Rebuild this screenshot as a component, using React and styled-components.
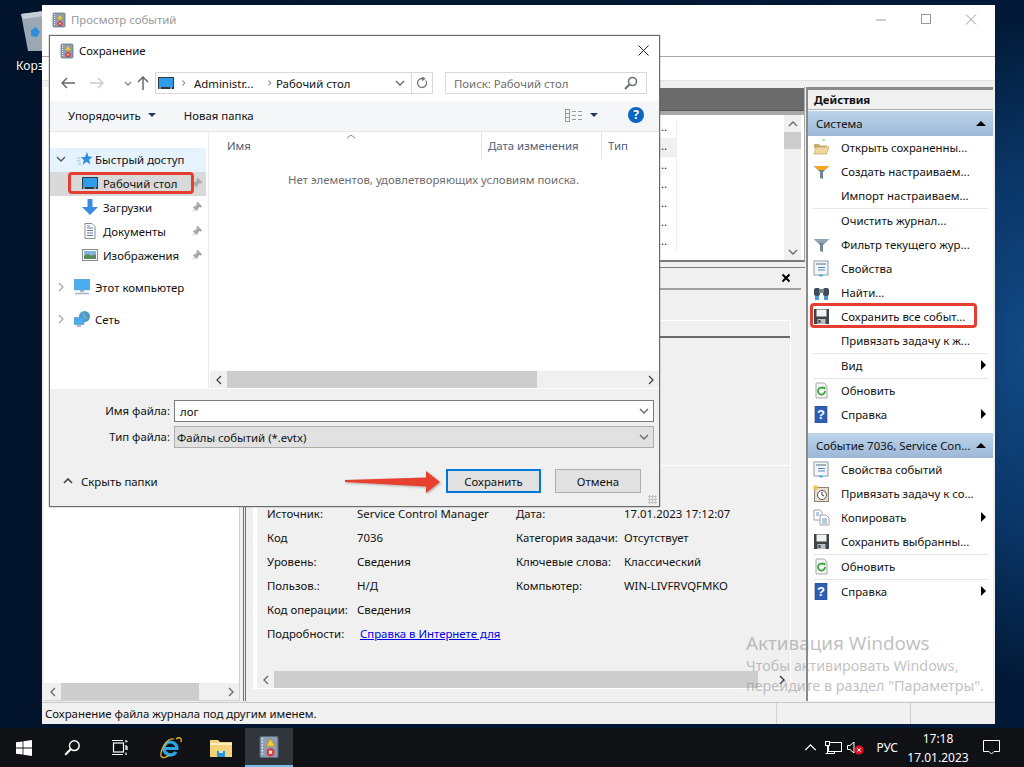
import React from 'react';
import styled, { createGlobalStyle } from 'styled-components';

const GlobalStyle = createGlobalStyle`
  html, body { margin: 0; padding: 0; background: #021830; }
  * { box-sizing: border-box; }
  #root { font-family: 'Noto Sans', 'Liberation Sans', sans-serif; font-size: 11.4px; color: #111; }
`;

const Desktop = styled.div`
  position: relative;
  width: 1024px;
  height: 767px;
  overflow: hidden;
  display: flex;
  flex-direction: column;
`;

const Wallpaper = styled.div`
  position: relative;
  flex: 1;
  background:
    radial-gradient(ellipse 140px 330px at 100% 48%, #124a85 0%, #0a3566 55%, transparent 100%),
    linear-gradient(90deg, #01142b 0%, #021a38 100%);
`;

const BinIcon = styled.div`
  position: absolute;
  left: 16px;
  top: 10px;
  width: 40px;
  color: #fff;
  font-size: 12px;
  line-height: 16px;
  white-space: nowrap;
  svg { display: block; margin: 0 0 4px 4px; }
  span { text-shadow: 0 1px 2px #000; }
`;

/* main event viewer window */
const MainWindow = styled.div`
  position: absolute;
  left: 42px;
  top: 5px;
  width: 953px;
  height: 719px;
  background: #f0f0f0;
  display: flex;
  flex-direction: column;
`;

const TitleBar = styled.div`
  height: 52px;
  flex: none;
  background: #fff;
  display: flex;
  align-items: flex-start;
  padding: 7px 0 0 9px;
  border-bottom: 1px solid #a8a8a8;
`;

const TitleText = styled.span`
  margin-left: 4px;
  color: #999;
  line-height: 16px;
`;

const WindowControls = styled.div`
  margin-left: auto;
  display: flex;
  padding: 2px 18px 0 0;
  gap: 33px;
  svg { display: block; }
`;

const MenuBar = styled.div`
  height: 24px;
  flex: none;
  background: #fff;
  border-bottom: 1px solid #e3e3e3;
`;

const Workspace = styled.div`
  flex: 1;
  min-height: 0;
  display: flex;
  padding: 6px 2px 0 2px;
`;

const TreePane = styled.div`
  width: 196px;
  flex: none;
  margin-right: 3px;
  background: #fff;
  display: flex;
  flex-direction: column;
  justify-content: flex-end;
  border-right: 1px solid #d0d0d0;
  border-bottom: 1px solid #d0d0d0;
`;

const Scrollbar = styled.div`
  height: 17px;
  flex: none;
  background: #f0f0f0;
  display: flex;
  align-items: center;
`;

const ScrollArrow = styled.div`
  width: 17px;
  height: 17px;
  flex: none;
  display: flex;
  align-items: center;
  justify-content: center;
  margin-left: ${({ $end }) => ($end ? 'auto' : '0')};
`;

const ScrollThumb = styled.div`
  height: 17px;
  width: ${({ $w }) => $w}px;
  background: #cdcdcd;
`;

const CenterPane = styled.div`
  width: 562px;
  flex: none;
  display: flex;
  flex-direction: column;
  border-left: 3px double #6f6f6f;
`;

const TopPane = styled.div`
  height: 175px;
  flex: none;
  display: flex;
  flex-direction: column;
  border-right: 1px solid #a8a8a8;
  border-bottom: 2px solid #7a7a7a;
`;

const DarkHeader = styled.div`
  height: 23px;
  flex: none;
  margin-top: 1px;
  background: #6b6b6b;
  border-bottom: 1px solid #555;
`;

const EventListWrap = styled.div`
  flex: 1;
  position: relative;
  background: #fff;
  border-top: 4px solid #a8a8a8;
  padding-top: 4px;
`;

const EventRow = styled.div`
  width: 431px;
  height: 19px;
  line-height: 15px;
  text-align: right;
  padding-right: 9px;
  color: #222;
  border-right: 1px solid #eee;
  background: ${({ $selected }) => ($selected ? '#f0f0f0' : '#fff')};
`;

const VScroll = styled.div`
  position: absolute;
  right: 3px;
  top: 0;
  bottom: 0;
  width: 17px;
  background: #f0f0f0;
  display: flex;
  flex-direction: column;
  align-items: center;
`;

const VThumb = styled.div`
  width: 17px;
  height: 17px;
  background: #cdcdcd;
`;

const VArrow = styled.div`
  height: 17px;
  display: flex;
  align-items: center;
  margin-top: ${({ $end }) => ($end ? 'auto' : '0')};
`;

const LowerPane = styled.div`
  flex: 1;
  min-height: 0;
  margin-top: 5px;
  display: flex;
  flex-direction: column;
  border-top: 1px solid #7a7a7a;
  padding: 0 6px 12px 7px;
`;

const PaneHeader = styled.div`
  height: 22px;
  flex: none;
  display: flex;
  align-items: center;
  justify-content: flex-end;
  padding-right: 10px;
  border-bottom: 2px solid #a0a0a0;
  margin-right: -2px;
`;

const TabBox = styled.div`
  flex: 1;
  min-height: 0;
  margin: 30px 8px 0 0;
  display: flex;
  flex-direction: column;
  border: 1px solid #fff;
  border-left-width: 4px;
`;

const TabStrip = styled.div`
  height: 17px;
  flex: none;
  border-bottom: 2px solid #6a6a6a;
`;

const Preview = styled.div`
  height: 128px;
  flex: none;
  border-bottom: 1px solid #fff;
`;

const Details = styled.div`
  flex: 1;
  padding: 36px 0 0 10px;
`;

const DetailGrid = styled.div`
  display: grid;
  grid-template-columns: 90px 159px 108px 1fr;
  grid-auto-rows: 24px;
  line-height: 24px;
  white-space: nowrap;
`;

const HelpLink = styled.a`
  color: #0000ee;
  text-decoration: underline;
  margin-left: 3px;
`;

const StatusBar = styled.div`
  height: 22px;
  flex: none;
  display: flex;
  align-items: center;
  padding-left: 3px;
  border-top: 1px solid #c8c8c8;
  margin-top: 1px;
`;

const StatusCell = styled.div`
  align-self: stretch;
  flex: none;
  width: ${({ $w }) => $w}px;
  border-left: 1px solid #d0d0d0;
  margin-left: ${({ $auto }) => ($auto ? 'auto' : '0')};
`;

/* actions column */
const ActionsPane = styled.div`
  width: 187px;
  flex: none;
  margin-left: 1px;
  background: #fff;
  border-top: 3px solid #8a8a8a;
  border-left: 2px solid #8a8a8a;
  display: flex;
  flex-direction: column;
`;

const ActionsTitle = styled.div`
  height: 20px;
  flex: none;
  background: #f0f0f0;
  font-weight: 700;
  line-height: 19px;
  padding-left: 6px;
  border-bottom: 1px solid #b0b0b0;
`;

const SectionBar = styled.div`
  height: 25px;
  flex: none;
  margin-top: ${({ $gap }) => $gap || 0}px;
  background: linear-gradient(180deg, #bdd5eb 0%, #9cb7d7 100%);
  display: flex;
  align-items: center;
  padding: 0 7px 0 8px;
  white-space: nowrap;
`;

const UpCaret = styled.span`
  margin-left: auto;
  width: 0;
  height: 0;
  border-left: 5px solid transparent;
  border-right: 5px solid transparent;
  border-bottom: 5px solid #000;
`;

const ActionRow = styled.div`
  height: 24px;
  flex: none;
  display: flex;
  align-items: center;
  padding: 0 6px 2px 5px;
  white-space: nowrap;
`;

const ActionIcon = styled.span`
  width: 17px;
  height: 17px;
  flex: none;
  margin-right: 11px;
  svg { display: block; }
`;

const RightCaret = styled.span`
  margin-left: auto;
  margin-right: 1px;
  width: 0;
  height: 0;
  border-top: 5px solid transparent;
  border-bottom: 5px solid transparent;
  border-left: 5px solid #000;
`;

const Separator = styled.div`
  height: 1px;
  flex: none;
  margin: 0 5px;
  background: #e6e6e6;
`;

/* save dialog */
const Dialog = styled.div`
  position: absolute;
  left: 49px;
  top: 35px;
  width: 611px;
  height: 472px;
  background: #fff;
  border: 1px solid #6a6a6a;
  display: flex;
  flex-direction: column;
  box-shadow: 0 0 1px #555;
`;

const DialogTitle = styled.div`
  height: 31px;
  flex: none;
  display: flex;
  align-items: center;
  padding: 0 10px 2px 9px;
  span { margin-left: 4px; }
  svg:last-child { margin-left: auto; }
`;

const AddressRow = styled.div`
  height: 34px;
  flex: none;
  display: flex;
  align-items: center;
  padding: 0 12px 2px 11px;
`;

const NavButton = styled.span`
  width: ${({ $w }) => $w}px;
  flex: none;
  display: flex;
  align-items: center;
  justify-content: center;
`;

const AddressBox = styled.div`
  width: 278px;
  height: 22px;
  margin-left: 6px;
  flex: none;
  border: 1px solid #d9d9d9;
  display: flex;
  align-items: center;
  padding-left: 2px;
  white-space: nowrap;
`;

const Crumb = styled.span`
  width: ${({ $w }) => $w}px;
  flex: none;
`;

const CrumbSep = styled.span`
  width: ${({ $w }) => $w}px;
  flex: none;
  display: flex;
  justify-content: center;
`;

const RefreshBox = styled.span`
  margin-left: auto;
  width: 21px;
  height: 20px;
  display: flex;
  align-items: center;
  justify-content: center;
  border-left: 1px solid #d9d9d9;
`;

const SearchBox = styled.div`
  margin-left: 12px;
  width: 202px;
  height: 22px;
  flex: none;
  border: 1px solid #d9d9d9;
  display: flex;
  align-items: center;
  justify-content: space-between;
  padding: 0 8px;
  color: #6d6d6d;
`;

const CommandBar = styled.div`
  height: 31px;
  flex: none;
  background: #f5f6f7;
  border-bottom: 1px solid #e8e8e8;
  display: flex;
  align-items: center;
  padding: 0 15px 2px 18px;
`;

const DownCaret = styled.span`
  width: 0;
  height: 0;
  margin-left: ${({ $ml }) => $ml}px;
  border-left: 4px solid transparent;
  border-right: 4px solid transparent;
  border-top: 4px solid ${({ $color }) => $color};
`;

const NewFolder = styled.span`
  margin-left: 28px;
`;

const ViewIcon = styled.span`
  margin-left: auto;
  display: flex;
`;

const HelpCircle = styled.span`
  margin-left: 30px;
  width: 16px;
  height: 16px;
  border-radius: 50%;
  background: #0a66c2;
  color: #fff;
  font-weight: 700;
  font-size: 12px;
  line-height: 16px;
  text-align: center;
`;

const DialogBody = styled.div`
  flex: 1;
  min-height: 0;
  display: flex;
`;

const NavPane = styled.div`
  width: 159px;
  flex: none;
  padding-top: 16px;
  border-right: 1px solid #ececec;
`;

const NavItem = styled.div`
  height: 24px;
  margin-right: 2px;
  margin-bottom: ${({ $after }) => $after || 0}px;
  display: flex;
  align-items: center;
  padding: 0 0 2px 5px;
  white-space: nowrap;
  background: ${({ $bg }) => $bg || 'transparent'};
`;

const Twisty = styled.span`
  width: 11px;
  flex: none;
  display: flex;
  justify-content: center;
`;

const NavIcon = styled.span`
  margin-left: ${({ $indent }) => $indent}px;
  margin-right: ${({ $gap }) => $gap}px;
  width: 16px;
  height: 16px;
  flex: none;
  svg { display: block; }
`;

const Pin = styled.span`
  margin-left: auto;
  padding-right: 4px;
  display: flex;
`;

const FileList = styled.div`
  flex: 1;
  min-width: 0;
  position: relative;
  display: flex;
  flex-direction: column;
`;

const ColumnHeader = styled.div`
  height: 25px;
  flex: none;
  display: grid;
  grid-template-columns: 273px 120px 1fr;
  color: #4c607a;
  line-height: 27px;
`;

const ColumnCell = styled.span`
  padding-left: ${({ $first }) => ($first ? 18 : 6)}px;
  border-right: ${({ $last }) => ($last ? 'none' : '1px solid #e5e5e5')};
`;

const SortCaret = styled.span`
  position: absolute;
  left: 137px;
  top: 0;
  line-height: 0;
`;

const EmptyNote = styled.div`
  flex: 1;
  padding: 15px 0 0 79px;
  color: #6d6d6d;
  line-height: 16px;
`;

const ListScroll = styled(Scrollbar)`
  margin-bottom: 1px;
  background: #f0f0f0;
  margin-left: 1px;
`;

const DialogFooter = styled.div`
  height: 117px;
  flex: none;
  background: #f0f0f0;
  padding: 11px 5px 0 0;
  position: relative;
`;

const FormGrid = styled.div`
  display: grid;
  grid-template-columns: 120px 1fr;
  grid-auto-rows: 22px;
  gap: 4px 4px;
`;

const FormLabel = styled.label`
  text-align: right;
  line-height: 22px;
`;

const FileInput = styled.div`
  display: flex;
  align-items: center;
  justify-content: space-between;
  padding: 0 4px 0 ${({ $type }) => ($type ? 2 : 5)}px;
  background: ${({ $type }) => ($type ? '#e1e1e1' : '#fff')};
  border: 1px solid ${({ $type }) => ($type ? '#adadad' : '#7a7a7a')};
`;

const FooterRow = styled.div`
  margin-top: 21px;
  height: 24px;
  display: flex;
  align-items: center;
  padding: 0 13px 0 13px;
`;

const HideFolders = styled.span`
  display: flex;
  align-items: center;
  gap: 8px;
`;

const DialogButton = styled.button`
  font: inherit;
  color: #111;
  height: 24px;
  padding: 0;
  width: ${({ $w }) => $w}px;
  margin-left: ${({ $ml }) => $ml};
  background: #e1e1e1;
  border: ${({ $primary }) => ($primary ? '2px solid #0078d7' : '1px solid #adadad')};
`;

const Grip = styled.span`
  position: absolute;
  right: 2px;
  bottom: 2px;
  width: 9px;
  height: 9px;
  background-image: radial-gradient(circle, #c4c4c4 1px, transparent 1.2px);
  background-size: 3px 3px;
`;

/* annotations laid on top of the screenshot */
const RedFrame = styled.div`
  position: absolute;
  left: ${({ $x }) => $x}px;
  top: ${({ $y }) => $y}px;
  width: ${({ $w }) => $w}px;
  height: ${({ $h }) => $h}px;
  border: 3px solid #e53d30;
  border-radius: 4px;
`;

const Arrow = styled.svg`
  position: absolute;
  left: 343px;
  top: 468px;
  filter: drop-shadow(1px 1px 1px rgba(60, 20, 20, 0.35));
`;

const Watermark = styled.div`
  position: absolute;
  left: 746px;
  top: 631px;
  color: rgba(140, 140, 140, 0.55);
  font-size: 14.35px;
  line-height: 20px;
  white-space: nowrap;
  pointer-events: none;
  strong {
    display: block;
    font-weight: 400;
    font-size: 18.9px;
    line-height: 25px;
  }
`;

/* taskbar */
const Taskbar = styled.div`
  height: 39px;
  flex: none;
  background: #0f1115;
  display: flex;
  align-items: stretch;
  color: #fff;
  font-size: 12px;
`;

const TaskButton = styled.div`
  width: ${({ $w }) => $w || 48}px;
  flex: none;
  display: flex;
  align-items: center;
  justify-content: center;
  background: ${({ $active }) => ($active ? '#30363c' : 'transparent')};
  border-bottom: ${({ $active }) => ($active ? '2px solid #76b9ed' : 'none')};
`;

const Tray = styled.div`
  margin-left: auto;
  display: flex;
  align-items: center;
  padding-right: 18px;
`;

const TraySlot = styled.span`
  width: ${({ $w }) => $w}px;
  flex: none;
  display: flex;
  justify-content: ${({ $end }) => ($end ? 'flex-end' : 'center')};
  padding-right: ${({ $end }) => ($end ? 2 : 0)}px;
`;

const Clock = styled.div`
  width: 76px;
  flex: none;
  text-align: center;
  line-height: 19px;
`;

const Line = ({ d, s = 10, c = '#666', w = 1.3 }) => (
  <svg width={s} height={s} viewBox="0 0 10 10" fill="none" stroke={c} strokeWidth={w}>
    <path d={d} />
  </svg>
);

const CHEV_DOWN = 'M1 3l4 4 4-4';
const CHEV_UP = 'M1 7l4-4 4 4';
const CHEV_LEFT = 'M7 1L3 5l4 4';
const CHEV_RIGHT = 'M3 1l4 4-4 4';

const EventLogIcon = ({ s = 16 }) => (
  <svg width={s} height={s} viewBox="0 0 16 16">
    <rect x="2" y="1" width="12" height="14" rx="1" fill="#8d9db3" stroke="#5c6a7c" strokeWidth=".7" />
    <path d="M3.500 2v12" stroke="#e8edf3" strokeWidth="1" strokeDasharray="1 1" />
    <path d="M9 2.500l3 5H6z" fill="#f5cf3a" stroke="#a98a14" strokeWidth=".4" />
    <circle cx="9" cy="11.500" r="2.600" fill="#d9363a" />
    <path d="M8 10.500l2 2m0-2l-2 2" stroke="#fff" strokeWidth=".8" />
  </svg>
);

const MonitorIcon = () => (
  <svg width="16" height="16" viewBox="0 0 16 16">
    <rect x="0" y="2" width="16" height="12" fill="#2b3a46" />
    <rect x="1" y="3" width="14" height="9" fill="#2f9cea" />
    <path d="M1 13h14" stroke="#dbe8f3" strokeWidth="1" strokeDasharray="2 9" />
  </svg>
);

const DownloadIcon = () => (
  <svg width="16" height="16" viewBox="0 0 16 16">
    <path d="M5.500 0h5v8H16l-8 8-8-8h5.500z" fill="#3c8be0" />
  </svg>
);

const DocIcon = () => (
  <svg width="16" height="16" viewBox="0 0 16 16" fill="none">
    <path d="M3 .5h7l3 3v12H3z" fill="#fff" stroke="#8a8a8a" />
    <path d="M5 5h6M5 7.500h6M5 10h6M5 12.500h6" stroke="#5a7ea0" />
    <path d="M5 3h3" stroke="#3c8be0" />
  </svg>
);

const PictureIcon = () => (
  <svg width="16" height="16" viewBox="0 0 16 16">
    <rect x=".5" y="2.500" width="15" height="11" fill="#fff" stroke="#8a8a8a" />
    <rect x="2" y="4" width="12" height="4.500" fill="#7fb4dd" />
    <path d="M2 12V8.500l4-1.500 3 1.500 5-1v4.500z" fill="#5d8a5a" />
  </svg>
);

const PcIcon = () => (
  <svg width="16" height="16" viewBox="0 0 16 16">
    <rect x="0" y="0" width="16" height="11" fill="#49aef0" stroke="#7aa4c4" strokeWidth=".6" />
    <path d="M6 11h4v2H6z" fill="#9ab3c7" />
    <path d="M1 14.500h14" stroke="#9ab3c7" strokeWidth="1.500" />
  </svg>
);

const NetworkIcon = () => (
  <svg width="16" height="16" viewBox="0 0 16 16">
    <circle cx="10.500" cy="5.500" r="5.500" fill="#4b9ad6" />
    <path d="M8 2c2 1 3 2 2 4l3 1" stroke="#8fd18a" fill="none" />
    <rect x="0" y="6.500" width="10" height="7" fill="#49aef0" stroke="#6b8aa3" strokeWidth=".6" />
    <path d="M3 15h4" stroke="#8a9cab" strokeWidth="1.400" />
  </svg>
);

const StarIcon = () => (
  <svg width="16" height="16" viewBox="0 0 16 16">
    <path d="M10 1l1.300 4.200L15.500 6l-3.400 2.700 1.200 4.800-3.900-2.800L5.600 14l1.300-5L3.500 6.200l4.500-.3z" fill="#2f8de0" />
    <path d="M0 7h3M0 10h3.500M1 13h3" stroke="#8cc4ef" />
  </svg>
);

const PinIcon = () => (
  <svg width="10" height="10" viewBox="0 0 10 10">
    <path d="M5.500 0L10 4.500 8.800 5.200 7.500 4.800 5.500 6.800 5.500 8 4.500 8.800 1.200 5.500 2 4.500 3.200 4.500 5.200 2.500 4.800 1.200zM3 7L.5 9.500" fill="#a8a8a8" stroke="#a8a8a8" strokeWidth=".6" />
  </svg>
);

const FolderOpenIcon = () => (
  <svg width="17" height="17" viewBox="0 0 17 17">
    <path d="M9 1h3" stroke="#52d052" />
    <path d="M1 5h5l1 1.500h7V9H1z" fill="#c9ad6c" />
    <path d="M1 15l2-7h13l-2.500 7z" fill="#efd99a" stroke="#b49a5c" strokeWidth=".6" />
  </svg>
);

const FunnelIcon = ({ top = '#f5a623', stem = '#6f8495' }) => (
  <svg width="17" height="17" viewBox="0 0 17 17">
    <path d="M1 3h15L10 9v7l-3-1V9z" fill={stem} />
    <path d="M1 3h15l-4 4H5z" fill={top} />
  </svg>
);

const PropsIcon = () => (
  <svg width="17" height="17" viewBox="0 0 17 17" fill="none">
    <rect x="1" y="1" width="14" height="14" fill="#f4f6f8" stroke="#8d9aa6" />
    <path d="M3 4h10" stroke="#9fb3c4" strokeWidth="2" />
    <path d="M5 7.500h7M5 10h7" stroke="#4f88c4" />
    <path d="M6 15.500h4" stroke="#35a7e0" strokeWidth="1.500" />
  </svg>
);

const BinocularsIcon = () => (
  <svg width="17" height="17" viewBox="0 0 17 17">
    <rect x="1" y="4" width="6" height="8" rx="2" fill="#3d4a57" />
    <rect x="10" y="4" width="6" height="8" rx="2" fill="#3d4a57" />
    <rect x="6" y="5" width="5" height="4" fill="#7b8894" />
    <rect x="2" y="12" width="4" height="4" fill="#4c9bd8" />
    <rect x="11" y="12" width="4" height="4" fill="#4c9bd8" />
  </svg>
);

const FloppyIcon = () => (
  <svg width="17" height="17" viewBox="0 0 17 17">
    <path d="M1 1h15v15H1z" fill="#3f4447" />
    <rect x="3.500" y="1.500" width="10" height="7" fill="#f2f2f2" />
    <rect x="4.500" y="11" width="8" height="5" fill="#b9bec2" />
    <rect x="5.500" y="12" width="2" height="3" fill="#3f4447" />
  </svg>
);

const RefreshDocIcon = () => (
  <svg width="17" height="17" viewBox="0 0 17 17" fill="none">
    <path d="M3 1h8l3 3v12H3z" fill="#f6f6f6" stroke="#a8a8a8" />
    <path d="M12 9a3.500 3.500 0 1 1-1.200-2.600" stroke="#3aa63a" strokeWidth="1.800" />
    <path d="M9.500 4.500l3 .5-.5 3z" fill="#3aa63a" />
  </svg>
);

const HelpBookIcon = () => (
  <svg width="17" height="17" viewBox="0 0 17 17">
    <rect x="2" y="0" width="12" height="17" fill="#2e5fb5" stroke="#20448a" strokeWidth=".6" />
    <text x="8" y="13" textAnchor="middle" fontSize="13" fontWeight="700" fontFamily="Liberation Sans, sans-serif" fill="#fff">?</text>
  </svg>
);

const ClockTaskIcon = () => (
  <svg width="17" height="17" viewBox="0 0 17 17" fill="none">
    <rect x="1.500" y="2.500" width="14" height="14" fill="#e6dfd0" stroke="#8c8474" />
    <circle cx="9" cy="10" r="4.500" fill="#fff" stroke="#555" />
    <path d="M9 7v3l2 1" stroke="#333" />
    <circle cx="2.500" cy="2.500" r="2.300" fill="#f6c437" />
  </svg>
);

const CopyIcon = () => (
  <svg width="17" height="17" viewBox="0 0 17 17" fill="none">
    <path d="M1 1h6l2 2v8H1z" fill="#fff" stroke="#9aa4ad" />
    <path d="M7 6h6l3 3v7H7z" fill="#fff" stroke="#9aa4ad" />
    <path d="M9 10h5M9 12h5M9 14h5M3 4h3M3 6h3" stroke="#6e94bb" />
  </svg>
);

const SearchGlass = ({ s = 14, c = '#6a7178', w = 1.6 }) => (
  <svg width={s} height={s} viewBox="0 0 14 14" fill="none" stroke={c} strokeWidth={w}>
    <circle cx="8.500" cy="5.500" r="4" />
    <path d="M5.500 8.500L1 13" strokeWidth={w + 0.5} />
  </svg>
);

const RecycleBin = () => (
  <svg width="24" height="44" viewBox="0 0 24 44">
    <path d="M1 4l23-3v40H8z" fill="#9aa8b4" />
    <path d="M1 4l23-3v5L3 9z" fill="#c4ced6" />
    <path d="M11 20l5-3 4 5-3 5-6-1z" fill="#2f8de0" />
  </svg>
);

const TASKVIEW = (
  <svg width="17" height="17" viewBox="0 0 17 17" fill="none" stroke="#fff" strokeWidth="1.200">
    <rect x="1.500" y="4" width="10" height="9" />
    <path d="M0 1.500h11M0 15.500h11M14 1v2.500M14 6v5M14 13.500V16" />
    <path d="M15 2v1M15 7v4" />
  </svg>
);

const actionsTop = [
  { icon: <FolderOpenIcon />, label: 'Открыть сохраненны...' },
  { icon: <FunnelIcon />, label: 'Создать настраиваем...' },
  { label: 'Импорт настраиваем...', sep: true },
  { label: 'Очистить журнал...' },
  { icon: <FunnelIcon top="#8fa5b5" />, label: 'Фильтр текущего жур...' },
  { icon: <PropsIcon />, label: 'Свойства' },
  { icon: <BinocularsIcon />, label: 'Найти...' },
  { icon: <FloppyIcon />, label: 'Сохранить все событ...' },
  { label: 'Привязать задачу к ж...', sep: true },
  { label: 'Вид', more: true, sep: true },
  { icon: <RefreshDocIcon />, label: 'Обновить' },
  { icon: <HelpBookIcon />, label: 'Справка', more: true },
];

const actionsEvent = [
  { icon: <PropsIcon />, label: 'Свойства событий' },
  { icon: <ClockTaskIcon />, label: 'Привязать задачу к со...' },
  { icon: <CopyIcon />, label: 'Копировать', more: true },
  { icon: <FloppyIcon />, label: 'Сохранить выбранны...', sep: true },
  { icon: <RefreshDocIcon />, label: 'Обновить', sep: true },
  { icon: <HelpBookIcon />, label: 'Справка', more: true },
];

const details = [
  ['Источник:', 'Service Control Manager', 'Дата:', '17.01.2023 17:12:07'],
  ['Код', '7036', 'Категория задачи:', 'Отсутствует'],
  ['Уровень:', 'Сведения', 'Ключевые слова:', 'Классический'],
  ['Пользов.:', 'Н/Д', 'Компьютер:', 'WIN-LIVFRVQFMKO'],
  ['Код операции:', 'Сведения', '', ''],
];

const ActionList = ({ items }) =>
  items.map((item) => (
    <React.Fragment key={item.label}>
      <ActionRow>
        <ActionIcon>{item.icon}</ActionIcon>
        {item.label}
        {item.more && <RightCaret />}
      </ActionRow>
      {item.sep && <Separator />}
    </React.Fragment>
  ));

function App() {
  return (
    <Desktop>
      <GlobalStyle />
      <Wallpaper>
        <BinIcon>
          <RecycleBin />
          <span>Корзина</span>
        </BinIcon>

        <MainWindow>
          <TitleBar>
            <EventLogIcon />
            <TitleText>Просмотр событий</TitleText>
            <WindowControls>
              <svg width="12" height="12" viewBox="0 0 12 12"><path d="M1 6h10" stroke="#999" /></svg>
              <svg width="12" height="12" viewBox="0 0 12 12" fill="none"><rect x="1.500" y=".5" width="9" height="9" stroke="#999" /></svg>
              <svg width="12" height="12" viewBox="0 0 12 12"><path d="M1 .5l10 10m0-10l-10 10" stroke="#999" /></svg>
            </WindowControls>
          </TitleBar>
          <MenuBar />
          <Workspace>
            <TreePane>
              <Scrollbar>
                <ScrollArrow><Line d={CHEV_LEFT} /></ScrollArrow>
                <ScrollThumb $w={138} />
                <ScrollArrow $end><Line d={CHEV_RIGHT} /></ScrollArrow>
              </Scrollbar>
            </TreePane>
            <CenterPane>
              <TopPane>
                <DarkHeader />
                <EventListWrap>
                  {[0, 1, 2, 3, 4, 5, 6].map((n) => (
                    <EventRow key={n} $selected={n === 1}>...</EventRow>
                  ))}
                  <VScroll>
                    <VArrow><Line d={CHEV_UP} /></VArrow>
                    <VThumb />
                    <VArrow $end><Line d={CHEV_DOWN} /></VArrow>
                  </VScroll>
                </EventListWrap>
              </TopPane>
              <LowerPane>
                <PaneHeader>
                  <Line d="M1.500 1.500l7 7m0-7l-7 7" c="#000" w={2} />
                </PaneHeader>
                <TabBox>
                  <TabStrip />
                  <Preview />
                  <Details>
                    <DetailGrid>
                      {details.flat().map((text, i) => <span key={i}>{text}</span>)}
                      <span>Подробности:</span>
                      <span><HelpLink>Справка в Интернете для </HelpLink></span>
                    </DetailGrid>
                  </Details>
                  <Scrollbar>
                    <ScrollArrow><Line d={CHEV_LEFT} /></ScrollArrow>
                    <ScrollThumb $w={484} />
                    <ScrollArrow $end><Line d={CHEV_RIGHT} c="#333" /></ScrollArrow>
                  </Scrollbar>
                </TabBox>
              </LowerPane>
            </CenterPane>
            <ActionsPane>
              <ActionsTitle>Действия</ActionsTitle>
              <SectionBar $gap={1}>Система<UpCaret /></SectionBar>
              <ActionList items={actionsTop} />
              <SectionBar $gap={6}>Событие 7036, Service Con...<UpCaret /></SectionBar>
              <ActionList items={actionsEvent} />
            </ActionsPane>
          </Workspace>
          <StatusBar>
            Сохранение файла журнала под другим именем.
            <StatusCell $auto $w={134} />
            <StatusCell $w={85} />
          </StatusBar>
        </MainWindow>

        <Dialog>
          <DialogTitle>
            <EventLogIcon />
            <span>Сохранение</span>
            <svg width="11" height="11" viewBox="0 0 11 11"><path d="M.5.500l10 10m0-10l-10 10" stroke="#222" /></svg>
          </DialogTitle>
          <AddressRow>
            <NavButton $w={14}><svg width="14" height="12" viewBox="0 0 14 12" fill="none" stroke="#6a6a6a" strokeWidth="1.500"><path d="M14 6H1.500M6 1L1 6l5 5" /></svg></NavButton>
            <NavButton $w={44}><svg width="14" height="12" viewBox="0 0 14 12" fill="none" stroke="#ccc" strokeWidth="1.500"><path d="M0 6h12.500M8 1l5 5-5 5" /></svg></NavButton>
            <NavButton $w={18}><Line d="M2 4l3 3 3-3" c="#888" /></NavButton>
            <NavButton $w={12}><svg width="12" height="14" viewBox="0 0 12 14" fill="none" stroke="#6a6a6a" strokeWidth="1.500"><path d="M6 14V1.500M1 6l5-5 5 5" /></svg></NavButton>
            <AddressBox>
              <MonitorIcon />
              <CrumbSep $w={20}><Line d="M3 2l3 3-3 3" c="#888" s={8} /></CrumbSep>
              <Crumb $w={69}>Administr...</Crumb>
              <CrumbSep $w={13}><Line d="M3 2l3 3-3 3" c="#888" s={8} /></CrumbSep>
              <Crumb $w={119}>Рабочий стол</Crumb>
              <Line d={CHEV_DOWN} c="#666" />
              <RefreshBox>
                <svg width="12" height="12" viewBox="0 0 12 12" fill="none" stroke="#777" strokeWidth="1.300"><path d="M9.800 3.500A4.500 4.500 0 1 1 6 1.500" /><path d="M6 0l2.500 1.700L6 3.500" fill="#777" /></svg>
              </RefreshBox>
            </AddressBox>
            <SearchBox>
              Поиск: Рабочий стол
              <SearchGlass />
            </SearchBox>
          </AddressRow>
          <CommandBar>
            Упорядочить
            <DownCaret $ml={7} $color="#1f3864" />
            <NewFolder>Новая папка</NewFolder>
            <ViewIcon>
              <svg width="17" height="13" viewBox="0 0 17 13" fill="none" stroke="#9a9a9a"><rect x=".5" y=".5" width="4" height="12" /><path d="M.5 4.500h4M.5 8.500h4M7 2.500h4M13 2.500h4M7 6.500h4M13 6.500h4M7 10.500h4M13 10.500h4" /></svg>
            </ViewIcon>
            <DownCaret $ml={8} $color="#1f3864" />
            <HelpCircle>?</HelpCircle>
          </CommandBar>
          <DialogBody>
            <NavPane>
              <NavItem $bg="#e5f3ff">
                <Twisty><Line d={CHEV_DOWN} c="#555" /></Twisty>
                <NavIcon $indent={11} $gap={2}><StarIcon /></NavIcon>
                Быстрый доступ
              </NavItem>
              <NavItem $bg="#d9d9d9">
                <Twisty />
                <NavIcon $indent={16} $gap={5}><MonitorIcon /></NavIcon>
                Рабочий стол
                <Pin><PinIcon /></Pin>
              </NavItem>
              <NavItem>
                <Twisty />
                <NavIcon $indent={16} $gap={5}><DownloadIcon /></NavIcon>
                Загрузки
                <Pin><PinIcon /></Pin>
              </NavItem>
              <NavItem>
                <Twisty />
                <NavIcon $indent={16} $gap={5}><DocIcon /></NavIcon>
                Документы
                <Pin><PinIcon /></Pin>
              </NavItem>
              <NavItem $after={8}>
                <Twisty />
                <NavIcon $indent={16} $gap={5}><PictureIcon /></NavIcon>
                Изображения
                <Pin><PinIcon /></Pin>
              </NavItem>
              <NavItem $after={8}>
                <Twisty><Line d={CHEV_RIGHT} c="#aaa" /></Twisty>
                <NavIcon $indent={8} $gap={5}><PcIcon /></NavIcon>
                Этот компьютер
              </NavItem>
              <NavItem>
                <Twisty><Line d={CHEV_RIGHT} c="#aaa" /></Twisty>
                <NavIcon $indent={8} $gap={5}><NetworkIcon /></NavIcon>
                Сеть
              </NavItem>
            </NavPane>
            <FileList>
              <ColumnHeader>
                <ColumnCell $first>Имя</ColumnCell>
                <ColumnCell>Дата изменения</ColumnCell>
                <ColumnCell $last>Тип</ColumnCell>
              </ColumnHeader>
              <SortCaret><Line d="M1 6l4-3 4 3" c="#888" w={1} /></SortCaret>
              <EmptyNote>Нет элементов, удовлетворяющих условиям поиска.</EmptyNote>
              <ListScroll>
                <ScrollArrow><Line d={CHEV_LEFT} c="#444" /></ScrollArrow>
                <ScrollThumb $w={310} />
                <ScrollArrow $end><Line d={CHEV_RIGHT} c="#444" /></ScrollArrow>
              </ListScroll>
            </FileList>
          </DialogBody>
          <DialogFooter>
            <FormGrid>
              <FormLabel>Имя файла:</FormLabel>
              <FileInput>лог<Line d="M1 3l4 4 4-4" c="#666" /></FileInput>
              <FormLabel>Тип файла:</FormLabel>
              <FileInput $type>Файлы событий (*.evtx)<Line d="M1 3l4 4 4-4" c="#666" /></FileInput>
            </FormGrid>
            <FooterRow>
              <HideFolders>
                <Line d={CHEV_UP} c="#444" w={1.600} />
                Скрыть папки
              </HideFolders>
              <DialogButton $primary $w={95} $ml="auto">Сохранить</DialogButton>
              <DialogButton $w={86} $ml="14px">Отмена</DialogButton>
            </FooterRow>
            <Grip />
          </DialogFooter>
        </Dialog>

        <RedFrame $x={68} $y={172} $w={126} $h={22} />
        <RedFrame $x={810} $y={303} $w={167} $h={25} />
        <Arrow width="100" height="28" viewBox="0 0 100 28">
          <path d="M2 12l81-2.500V3L97 14 83 25v-6.500L2 14z" fill="#e8402f" />
        </Arrow>

        <Watermark>
          <strong>Активация Windows</strong>
          Чтобы активировать Windows,<br />
          перейдите в раздел "Параметры".
        </Watermark>
      </Wallpaper>

      <Taskbar>
        <TaskButton>
          <svg width="16" height="16" viewBox="0 0 16 16" fill="#fff"><path d="M0 2.300l6.600-.9v6.200H0zM7.400 1.300L16 0v7.600H7.400zM0 8.400h6.600v6.200L0 13.700zM7.400 8.400H16V16l-8.600-1.300z" /></svg>
        </TaskButton>
        <TaskButton><SearchGlass s={17} c="#fff" w={1.200} /></TaskButton>
        <TaskButton>{TASKVIEW}</TaskButton>
        <TaskButton $w={52}>
          <svg width="23" height="23" viewBox="0 0 23 23" fill="none">
            <path d="M5 12.500h13a6.500 6.500 0 1 0-1 3.500" stroke="#2aa5e6" strokeWidth="3" />
            <path d="M4.500 11.500a7 7 0 0 0 12 5" stroke="#2aa5e6" strokeWidth="3" />
            <path d="M15 3C8 1 1 15 2 20c1 3 6 1 9-1M17 3c3-2 6-2 5 3" stroke="#f0b429" strokeWidth="1.300" />
          </svg>
        </TaskButton>
        <TaskButton $w={49}>
          <svg width="22" height="19" viewBox="0 0 22 19">
            <path d="M0 2h8l2 2h12v15H0z" fill="#f3d27a" />
            <path d="M0 5h22v2H0z" fill="#fdf0c0" />
            <path d="M7 13h8v6H7z" fill="#2a94dc" />
            <path d="M9 13h4v2H9z" fill="#bfe3f7" />
          </svg>
        </TaskButton>
        <TaskButton $active><EventLogIcon s={24} /></TaskButton>
        <Tray>
          <TraySlot $w={24}><Line d="M1 7l4-4 4 4" c="#fff" s={13} w={1} /></TraySlot>
          <TraySlot $w={22}>
            <svg width="17" height="14" viewBox="0 0 17 14" fill="none" stroke="#fff"><rect x="3.500" y="1.500" width="13" height="9" /><rect x=".5" y=".5" width="4" height="4" fill="#0f1115" /><path d="M2.500 5v7.500M.5 12.500h9M9.500 10.500v2" /></svg>
          </TraySlot>
          <TraySlot $w={22}>
            <svg width="17" height="14" viewBox="0 0 17 14"><path d="M.5 4.500h2.500l4-3.500v11l-4-3.500H.5z" fill="none" stroke="#fff" /><circle cx="12" cy="9" r="4.500" fill="#e81123" /><path d="M10.300 7.300l3.400 3.400m0-3.400l-3.400 3.400" stroke="#fff" /></svg>
          </TraySlot>
          <TraySlot $w={34} $end>РУС</TraySlot>
          <Clock>17:18<br />17.01.2023</Clock>
          <TraySlot $w={30}>
            <svg width="17" height="15" viewBox="0 0 17 15" fill="none" stroke="#fff"><path d="M.5.500h16v11H11l-2.500 2.500L6 11.500H.5z" /></svg>
          </TraySlot>
        </Tray>
      </Taskbar>
    </Desktop>
  );
}

export default App;
